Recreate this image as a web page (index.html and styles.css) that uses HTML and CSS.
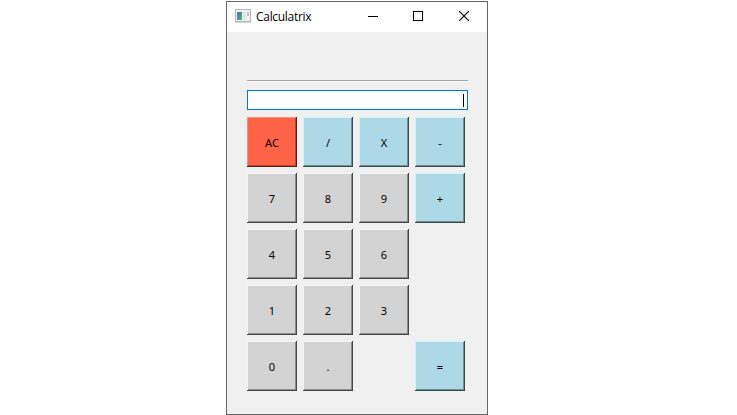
FILE: index.html
```html
<!DOCTYPE html>
<html lang="en">
<head>
<meta charset="utf-8">
<title>Calculatrix</title>
<link rel="stylesheet" href="styles.css">
</head>
<body>
<main class="window">
  <header class="titlebar">
    <svg class="app-icon" width="16" height="14" viewBox="0 0 16 14">
      <defs>
        <linearGradient id="pane" x1="0" y1="0" x2="1" y2="1">
          <stop offset="0" stop-color="#4474b4"/>
          <stop offset="0.45" stop-color="#4b8c9c"/>
          <stop offset="1" stop-color="#5cb878"/>
        </linearGradient>
      </defs>
      <rect x="0.5" y="0.5" width="15" height="12" fill="#f1f1f1" stroke="#b4b7ba"/>
      <path d="M0 13.5H16" stroke="#d8d8d8"/>
      <rect x="2" y="3" width="5" height="8" fill="url(#pane)"/>
      <rect x="8" y="3" width="3" height="8" fill="#e2e4e6"/>
      <rect x="12" y="3" width="2" height="4" fill="#a9cfb4"/>
    </svg>
    <h1 class="title">Calculatrix</h1>
    <svg class="control" width="10" height="10"><path d="M0 5.5H10" stroke="#000"/></svg>
    <svg class="control" width="10" height="10"><rect x="0.5" y="0.5" width="9" height="9" fill="none" stroke="#000"/></svg>
    <svg class="control close" width="10" height="10"><path d="M0 0L10 10M10 0L0 10" stroke="#000" stroke-width="1.1"/></svg>
  </header>
  <section class="content">
    <div class="rule"></div>
    <div class="display"><span class="caret"></span></div>
    <div class="keys">
      <button class="key clear">AC</button>
      <button class="key op">/</button>
      <button class="key op">X</button>
      <button class="key op">-</button>
      <button class="key">7</button>
      <button class="key">8</button>
      <button class="key">9</button>
      <button class="key op">+</button>
      <button class="key">4</button>
      <button class="key">5</button>
      <button class="key">6</button>
      <span></span>
      <button class="key">1</button>
      <button class="key">2</button>
      <button class="key">3</button>
      <span></span>
      <button class="key">0</button>
      <button class="key">.</button>
      <span></span>
      <button class="key op">=</button>
    </div>
  </section>
</main>
</body>
</html>
```
FILE: styles.css
```css
* {
  box-sizing: border-box;
}

body {
  margin: 0;
  height: 415px;
  padding: 1px 0 0 226px;
  background: #fff;
  overflow: hidden;
}

.window {
  width: 262px;
  height: 414px;
  border: 1px solid #666;
  background: #f0f0f0;
}

.titlebar {
  display: flex;
  align-items: center;
  height: 30px;
  padding: 0 18px 0 8px;
  background: #fff;
}

.app-icon {
  margin-right: 5px;
  margin-bottom: 2px;
}

.title {
  flex: 1;
  margin: 0;
  font: 400 12px/16px "Open Sans", sans-serif;
  letter-spacing: -0.3px;
  color: #000;
}

.control {
  margin-left: 35px;
  margin-bottom: 2px;
}

.close {
  margin-left: 36px;
}

.content {
  display: flex;
  flex-direction: column;
  width: 261px;
  padding: 48px 20px 0;
}

.rule {
  height: 2px;
  border-top: 1px solid #a0a0a0;
  border-bottom: 1px solid #fff;
  margin-bottom: 8px;
}

.display {
  display: flex;
  justify-content: flex-end;
  height: 20px;
  margin-bottom: 7px;
  padding: 3px;
  border: 1px solid #0078d7;
  background: #fff;
}

.caret {
  width: 1px;
  height: 13px;
  background: #000;
}

.keys {
  display: grid;
  grid-template-columns: repeat(4, 50px);
  grid-auto-rows: 50px;
  gap: 6px;
}

.key {
  --face: #d3d3d3;
  --light: #f4f4f4;
  --shade: #8c8c8c;
  --edge: #464646;
  margin: 0;
  padding: 1px 0 0;
  border: 0;
  background: var(--face);
  box-shadow:
    inset -1px -1px var(--edge),
    inset 1px 1px var(--light),
    inset -2px -2px var(--shade);
  font: 11px/14px "Noto Sans", sans-serif;
  color: #000;
}

.op {
  --face: #add8e6;
  --light: #cdf3fb;
  --shade: #739099;
  --edge: #39484d;
}

.clear {
  --face: #ff6347;
  --light: #ff8c78;
  --shade: #b8432e;
  --edge: #552118;
}
```
